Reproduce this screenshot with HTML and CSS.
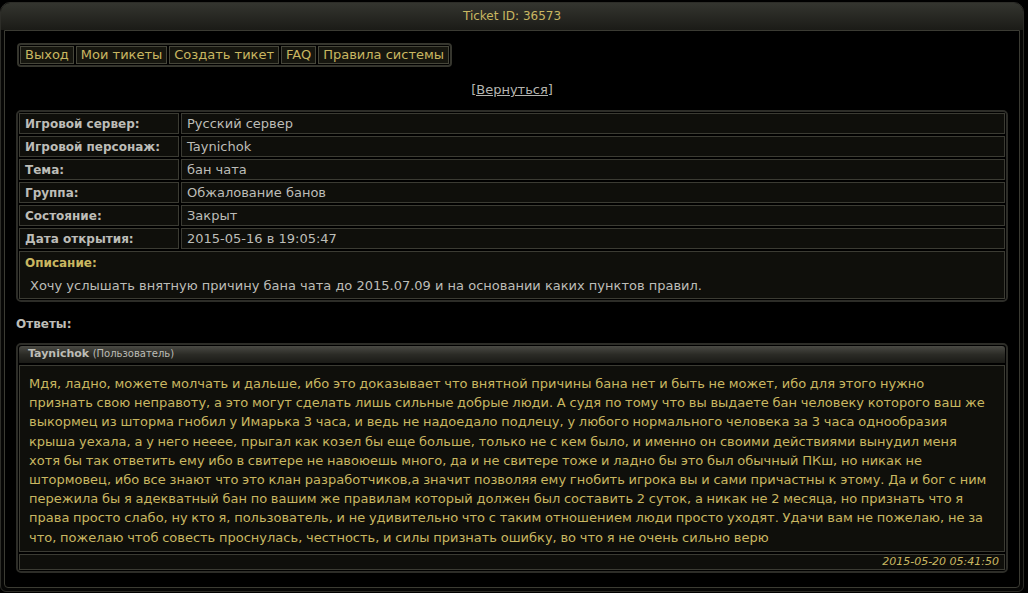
FILE: index.html
```html
<!DOCTYPE html>
<html lang="ru">
<head>
  <meta charset="UTF-8" />
  <title>Ticket ID: 36573</title>
  <link rel="stylesheet" href="styles.css">
</head>
<body>

  <div class="window">
    <div class="titlebar">Ticket ID: 36573</div>

    <div class="content">
      <!-- top menu -->
      <div class="menu">
        <a href="#">Выход</a>
        <a href="#">Мои тикеты</a>
        <a href="#">Создать тикет</a>
        <a href="#">FAQ</a>
        <a href="#">Правила системы</a>
      </div>

      <div class="back"><a href="#">[Вернуться]</a></div>

      <!-- ticket info -->
      <div class="panel">
        <table class="info">
          <tr><td class="label">Игровой сервер:</td><td>Русский сервер</td></tr>
          <tr><td class="label">Игровой персонаж:</td><td>Taynichok</td></tr>
          <tr><td class="label">Тема:</td><td>бан чата</td></tr>
          <tr><td class="label">Группа:</td><td>Обжалование банов</td></tr>
          <tr><td class="label">Состояние:</td><td>Закрыт</td></tr>
          <tr><td class="label">Дата открытия:</td><td>2015-05-16 в 19:05:47</td></tr>
          <tr>
            <td class="desc" colspan="2">
              <div class="label">Описание:</div>
              <p>Хочу услышать внятную причину бана чата до 2015.07.09 и на основании каких пунктов правил.</p>
            </td>
          </tr>
        </table>
      </div>

      <h3 class="answers">Ответы:</h3>

      <!-- reply -->
      <div class="panel reply">
        <div class="reply-head"><b>Taynichok</b> <span>(Пользователь)</span></div>
        <div class="reply-body">Мдя, ладно, можете молчать и дальше, ибо это доказывает что внятной причины бана нет и быть не может, ибо для этого нужно<br>
признать свою неправоту, а это могут сделать лишь сильные добрые люди. А судя по тому что вы выдаете бан человеку которого ваш же<br>
выкормец из шторма гнобил у Имарька 3 часа, и ведь не надоедало подлецу, у любого нормального человека за 3 часа однообразия<br>
крыша уехала, а у него нееее, прыгал как козел бы еще больше, только не с кем было, и именно он своими действиями вынудил меня<br>
хотя бы так ответить ему ибо в свитере не навоюешь много, да и не свитере тоже и ладно бы это был обычный ПКш, но никак не<br>
штормовец, ибо все знают что это клан разработчиков,а значит позволяя ему гнобить игрока вы и сами причастны к этому. Да и бог с ним<br>
пережила бы я адекватный бан по вашим же правилам который должен был составить 2 суток, а никак не 2 месяца, но признать что я<br>
права просто слабо, ну кто я, пользователь, и не удивительно что с таким отношением люди просто уходят. Удачи вам не пожелаю, не за<br>
что, пожелаю чтоб совесть проснулась, честность, и силы признать ошибку, во что я не очень сильно верю</div>
        <div class="reply-foot">2015-05-20 05:41:50</div>
      </div>
    </div>
  </div>

</body>
</html>
```

FILE: styles.css
```css
:root {
  --gold: #c9b761;
  --gray: #bdbdb8;
  --line: #3b3b33;
  --frame: #2d2d28;
  --cell: #0f0f0b;
}
* { box-sizing: border-box; margin: 0; padding: 0; }
html, body {
  background: #000;
}
body {
  font-family: "DejaVu Sans", Verdana, sans-serif;
  font-size: 13px;
  color: var(--gray);
  padding-top: 2px;
}
.window {
  width: 1024px;
  height: 590px;
  border: 1px solid var(--frame);
  border-radius: 10px 10px 6px 6px;
  background: #060605;
  display: flex;
  flex-direction: column;
}
.titlebar {
  height: 27px;
  line-height: 26px;
  text-align: center;
  color: var(--gold);
  font-size: 12px;
  background: linear-gradient(#34352f, #1b1b17);
  border-radius: 9px 9px 0 0;
}
.content {
  flex: 1;
  margin: 0 3px 3px;
  border: 1px solid var(--line);
  border-radius: 0 0 4px 4px;
  background: #000;
  padding: 12px 11px 0;
}
/* menu */
.menu {
  display: flex;
  width: fit-content;
  gap: 2px;
  padding: 1px;
  border: 2px solid #36362e;
  border-radius: 4px;
  margin-left: 1px;
}
.menu a {
  display: block;
  height: 18px;
  line-height: 16px;
  padding: 0 4px;
  border: 1px solid #46463a;
  background: #16160f;
  color: var(--gold);
  text-decoration: none;
}
.back {
  text-align: center;
  margin: 14px 0 11px;
  height: 18px;
  line-height: 18px;
}
.back a {
  color: #b5b5b0;
}
/* panels */
.panel {
  border: 2px solid var(--frame);
  border-radius: 5px;
}
table.info {
  border-collapse: separate;
  border-spacing: 2px;
  margin: -1px;
  width: calc(100% + 2px);
}
table.info td {
  height: 21px;
  padding: 0 5px;
  border: 1px solid var(--line);
  background: var(--cell);
  color: var(--gray);
}
table.info td.label {
  width: 160px;
}
.label {
  color: var(--gold);
  font-weight: bold;
  font-size: 12px;
}
table.info td.desc {
  height: 48px;
  padding: 4px 5px 4px;
  vertical-align: top;
}
.desc p {
  margin-top: 8px;
  padding-left: 5px;
}
.answers {
  font-size: 12px;
  font-weight: bold;
  color: var(--gray);
  margin: 15px 0 12px;
  height: 14px;
  line-height: 14px;
}
/* reply */
.reply {
  padding: 1px;
}
.reply-head {
  height: 17px;
  line-height: 16px;
  padding: 0 9px;
  background: linear-gradient(#4a4a44, #2b2b26 50%, #1a1a16);
  border-radius: 3px 3px 0 0;
  color: #bdbdb6;
  font-size: 11px;
}
.reply-head span {
  font-size: 10px;
}
.reply-body {
  margin-top: 2px;
  border: 1px solid var(--line);
  background: var(--cell);
  color: var(--gold);
  line-height: 19.2px;
  padding: 8px 0 4px 9px;
  white-space: nowrap;
  word-spacing: -0.4px;
  overflow: hidden;
}
.reply-foot {
  margin-top: 2px;
  border: 1px solid var(--line);
  background: var(--cell);
  color: var(--gold);
  font-size: 11px;
  font-style: italic;
  text-align: right;
  height: 16px;
  line-height: 14px;
  padding-right: 5px;
}
```
